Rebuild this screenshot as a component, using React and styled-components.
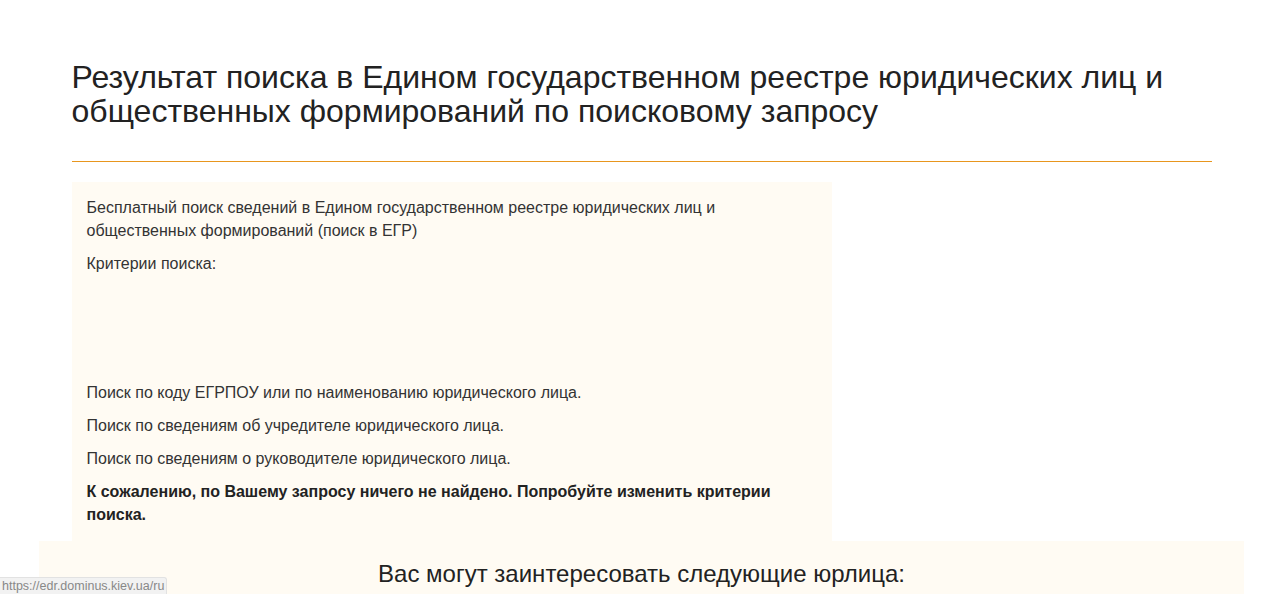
import React from "react";
import styled, { createGlobalStyle } from "styled-components";

const Global = createGlobalStyle`
  html, body { margin: 0; padding: 0; background: #fff; }
  body { font-family: "Liberation Sans", Arial, sans-serif; color: #333; overflow: hidden; }
`;

const Container = styled.div`
  width: 1140px;
  margin: 0 auto;
  padding-top: 60px;
`;

const Title = styled.h1`
  margin: 0;
  font-size: 32px;
  line-height: 34px;
  font-weight: 400;
  color: #222;
`;

const Rule = styled.hr`
  margin: 33px 0 20px;
  border: 0;
  border-top: 1px solid #e8961e;
  height: 0;
`;

const InfoBox = styled.section`
  width: 730px;
  background: #fffbf3;
  padding: 14px 15px 5px;
  font-size: 16px;
  line-height: 23px;
`;

const Para = styled.p`
  margin: 0 0 10px;
  font-weight: ${(p) => (p.$bold ? 700 : 400)};
  color: ${(p) => (p.$bold ? "#222" : "#333")};
`;

const Spacer = styled.div`
  height: 96px;
`;

const Suggest = styled.section`
  box-sizing: border-box;
  width: 1205px;
  margin: 0 auto;
  background: #fffbf3;
  padding-top: 19px;
  height: 53px;
  text-align: center;
`;

const SuggestTitle = styled.h2`
  margin: 0;
  font-size: 24px;
  line-height: 28px;
  font-weight: 400;
  color: #222;
`;

const StatusBar = styled.div`
  position: fixed;
  left: 0;
  bottom: 0;
  padding: 0 2px 0 2px;
  height: 16px;
  line-height: 16px;
  font-size: 12.5px;
  color: #888;
  background: #f2f2f2;
  border: 1px solid #e2e2e2;
  border-left: 0;
  border-bottom: 0;
  border-top-right-radius: 3px;
`;

export default function App() {
  return (
    <>
      <Global />
      <Container>
        <Title>
          Результат поиска в Едином государственном реестре юридических лиц и
          общественных формирований по поисковому запросу
        </Title>
        <Rule />
        <InfoBox>
          <Para>
            Бесплатный поиск сведений в Едином государственном реестре юридических лиц и
            общественных формирований (поиск в ЕГР)
          </Para>
          <Para>Критерии поиска:</Para>
          <Spacer />
          <Para>Поиск по коду ЕГРПОУ или по наименованию юридического лица.</Para>
          <Para>Поиск по сведениям об учредителе юридического лица.</Para>
          <Para>Поиск по сведениям о руководителе юридического лица.</Para>
          <Para $bold>
            К сожалению, по Вашему запросу ничего не найдено. Попробуйте изменить критерии
            поиска.
          </Para>
        </InfoBox>
      </Container>
      <Suggest>
        <SuggestTitle>Вас могут заинтересовать следующие юрлица:</SuggestTitle>
      </Suggest>
      <StatusBar>https://edr.dominus.kiev.ua/ru</StatusBar>
    </>
  );
}
